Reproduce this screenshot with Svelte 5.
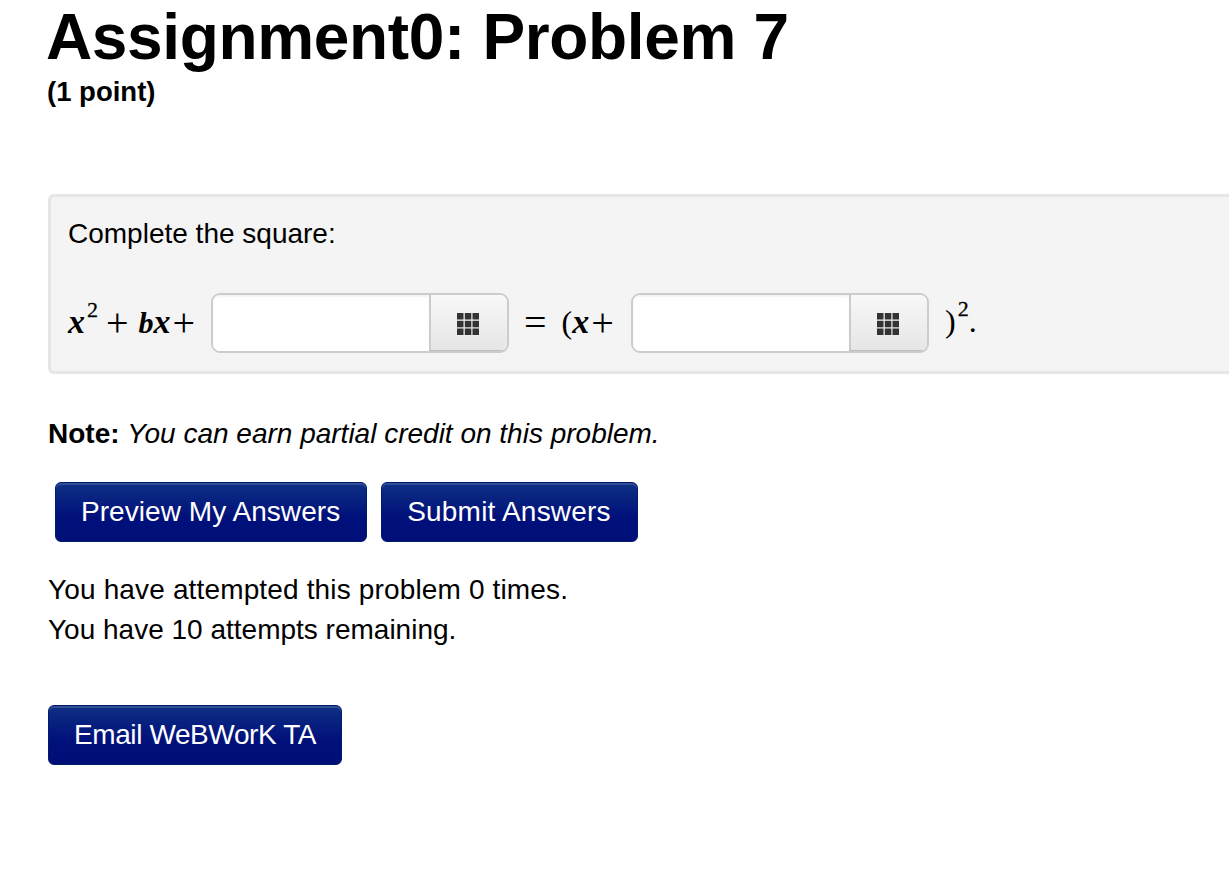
<script>
	const attempts = 0;
	const remaining = 10;
</script>

<div class="page">
	<h1>Assignment0: Problem 7</h1>
	<div class="points">(1 point)</div>

	<div class="problem">
		<p class="prompt">Complete the square:</p>
		<div class="equation">
			<span class="math first"><i>x</i><sup>2</sup><span class="sym op">+</span><i class="b">b</i><i>x</i><span class="sym">+</span></span>
			<div class="answer">
				<input type="text" aria-label="first answer" />
				<button class="palette" aria-label="equation editor">
					{@render gridIcon()}
				</button>
			</div>
			<span class="math second"><span class="sym eq">=</span>(<i>x</i><span class="sym">+</span></span>
			<div class="answer">
				<input type="text" aria-label="second answer" />
				<button class="palette" aria-label="equation editor">
					{@render gridIcon()}
				</button>
			</div>
			<span class="math third">)<sup>2</sup>.</span>
		</div>
	</div>

	<p class="note"><b>Note:</b> <em>You can earn partial credit on this problem.</em></p>

	<div class="actions">
		<button class="btn">Preview My Answers</button>
		<button class="btn submit">Submit Answers</button>
	</div>

	<p class="attempts"><span class="made">You have attempted this problem {attempts} times.</span><br />You have {remaining} attempts remaining.</p>

	<button class="btn email">Email WeBWorK TA</button>
</div>

{#snippet gridIcon()}
	<svg width="22" height="22" viewBox="0 0 22 22" fill="#333">
		<rect x="0" y="0" width="6.5" height="6.5" />
		<rect x="7.8" y="0" width="6.5" height="6.5" />
		<rect x="15.5" y="0" width="6.5" height="6.5" />
		<rect x="0" y="7.8" width="6.5" height="6.5" />
		<rect x="7.8" y="7.8" width="6.5" height="6.5" />
		<rect x="15.5" y="7.8" width="6.5" height="6.5" />
		<rect x="0" y="15.5" width="6.5" height="6.5" />
		<rect x="7.8" y="15.5" width="6.5" height="6.5" />
		<rect x="15.5" y="15.5" width="6.5" height="6.5" />
	</svg>
{/snippet}

<style>
	:global(body) {
		margin: 0;
		background: #fff;
		overflow: hidden;
	}

	.page {
		padding-left: 48px;
		font-family: "Liberation Sans", Arial, sans-serif;
		font-size: 28px;
		color: #000;
		height: 877px;
		box-sizing: border-box;
	}

	h1 {
		margin: 0 0 0 -2px;
		padding-top: 3px;
		font-size: 64px;
		letter-spacing: -0.35px;
		line-height: 68px;
		font-weight: 700;
	}

	.points {
		font-size: 27.5px;
		font-weight: 700;
		line-height: 30px;
		margin: 6px 0 0 -1px;
	}

	.problem {
		margin-top: 87px;
		height: 180px;
		box-sizing: border-box;
		background: #f4f4f4;
		border: 3px solid #e6e6e6;
		border-right: none;
		border-radius: 6px 0 0 6px;
		padding: 20px 0 0 17px;
	}

	.prompt {
		margin: 0;
		line-height: 34px;
	}

	.equation {
		display: flex;
		align-items: center;
		margin-top: 42px;
		height: 60px;
	}

	.math {
		font-family: "Liberation Serif", "Times New Roman", serif;
		font-size: 32px;
		white-space: nowrap;
		padding-bottom: 3px;
		box-sizing: border-box;
	}

	.math i {
		font-size: 34px;
		font-weight: 700;
	}

	.math i.b {
		font-size: 30px;
		margin-left: 1px;
	}

	.math sup {
		font-size: 22px;
		line-height: 0;
		vertical-align: 16px;
		margin-left: 2px;
		-webkit-text-stroke: 0.3px #000;
	}

	.sym {
		font-size: 40px;
		line-height: 0;
		vertical-align: -3px;
		margin-left: 2px;
	}

	.op {
		margin: 0 9px 0 8px;
	}

	.eq {
		margin: 0 15px 0 0;
	}

	.first {
		width: 143px;
	}

	.second {
		width: 122px;
		padding-left: 15px;
	}

	.third {
		padding-left: 16px;
	}

	.answer {
		display: flex;
		width: 298px;
		height: 60px;
		box-sizing: border-box;
		border: 2px solid #ccc;
		border-radius: 9px;
		overflow: hidden;
		background: #fff;
	}

	.answer input {
		flex: 1;
		min-width: 0;
		border: none;
		outline: none;
		background: #fff;
		padding: 0;
		box-shadow: inset 0 2px 2px rgba(0, 0, 0, 0.05);
	}

	.palette {
		width: 78px;
		display: flex;
		align-items: center;
		justify-content: center;
		padding: 2px 2px 0 0;
		border: none;
		border-left: 2px solid #ccc;
		border-bottom: 1px solid #bbb;
		background: linear-gradient(#f8f8f8, #e6e6e6);
	}

	.note {
		margin: 42px 0 0;
		line-height: 36px;
	}

	.actions {
		display: flex;
		gap: 14px;
		margin: 30px 0 0 7px;
	}

	.btn {
		display: block;
		height: 60px;
		padding: 0 26px 0 25px;
		border: 1px solid #001a6e;
		border-radius: 6px;
		background: linear-gradient(#0f3084, #00107a 60%, #000f78);
		box-shadow: inset 0 2px 0 rgba(255, 255, 255, 0.15);
		color: #fff;
		font-family: "Liberation Sans", Arial, sans-serif;
		font-size: 28px;
		letter-spacing: 0.05px;
	}

	.submit {
		letter-spacing: 0.2px;
	}

	.attempts {
		margin: 28px 0 0;
		line-height: 40px;
	}

	.made {
		letter-spacing: 0.15px;
	}

	.email {
		margin-top: 55px;
		padding: 0 25px;
		letter-spacing: -0.4px;
	}
</style>
